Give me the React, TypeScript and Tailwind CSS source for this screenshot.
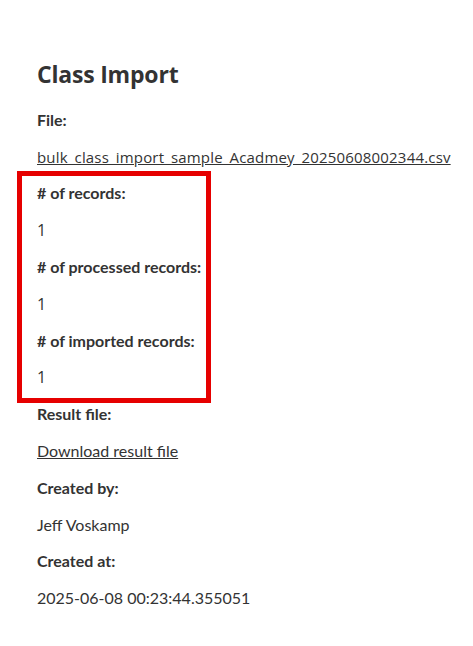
import React from "react";

const rows = [
  { label: "File:", value: "bulk_class_import_sample_Acadmey_20250608002344.csv", kind: "file" },
  { label: "# of records:", value: "1", kind: "num" },
  { label: "# of processed records:", value: "1", kind: "num" },
  { label: "# of imported records:", value: "1", kind: "num" },
  { label: "Result file:", value: "Download result file", kind: "link" },
  { label: "Created by:", value: "Jeff Voskamp", kind: "text" },
  { label: "Created at:", value: "2025-06-08 00:23:44.355051", kind: "text" },
];

const valueClass = (kind: string) => {
  if (kind === "file") return "underline font-['Open_Sans',sans-serif] text-[15px] tracking-[0.18px]";
  if (kind === "num") return "font-['Open_Sans',sans-serif] text-[16px]";
  if (kind === "link") return "underline text-[16px]";
  return "text-[16px]";
};

export default function App() {
  return (
    <div className="relative min-h-[646px] bg-white text-[#333] font-['Lato',sans-serif]">
      <div className="flex flex-col gap-[14.8px] px-[37px] pt-[59px]">
        <h1 className="mb-[5px] text-[23px] font-bold leading-[30px] font-['Open_Sans',sans-serif] tracking-[-0.2px]">
          Class Import
        </h1>
        {rows.map((r) => (
          <React.Fragment key={r.label}>
            <div className="text-[16px] font-bold leading-[22px]">{r.label}</div>
            <div className={`whitespace-nowrap leading-[22px] ${valueClass(r.kind)}`}>
              {r.value}
            </div>
          </React.Fragment>
        ))}
      </div>
      {/* highlight box */}
      <div className="pointer-events-none absolute left-[17px] top-[171px] h-[232px] w-[194px] border-[5px] border-[#e60000]" />
    </div>
  );
}
